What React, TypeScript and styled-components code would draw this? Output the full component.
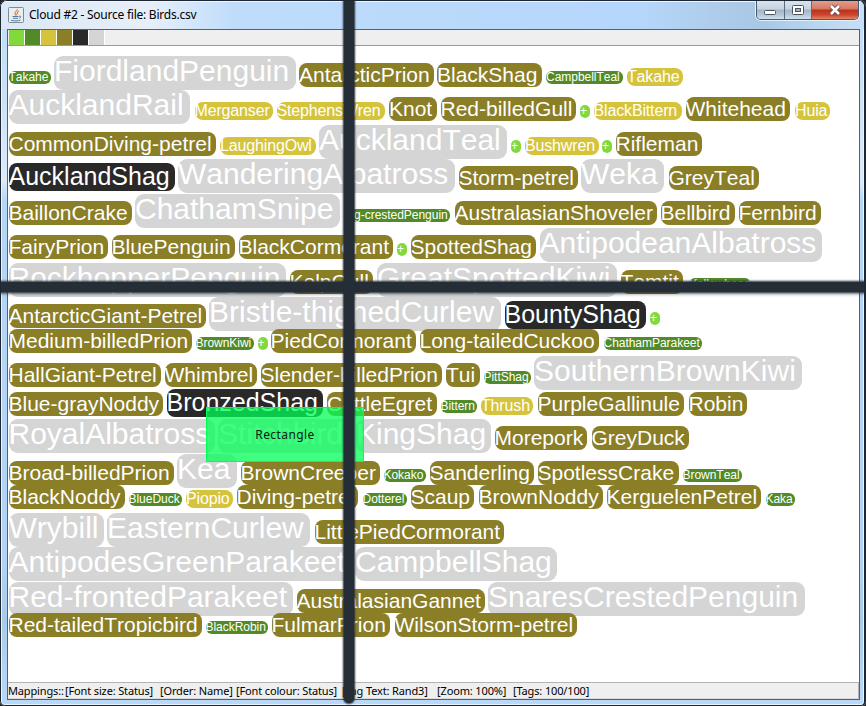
import React from "react";
import styled, { createGlobalStyle } from "styled-components";

type Kind = "extinct" | "threatened" | "rare" | "common" | "dark" | "pale";

const kinds: Record<Kind, { color: string; size: number; line: number; height: number; top: number; radius: number; spacing: number }> = {
  extinct: { color: "#82d93c", size: 12, line: 12, height: 13, top: 15, radius: 6, spacing: 0 },
  threatened: { color: "#528a27", size: 12, line: 12, height: 13, top: 15, radius: 6, spacing: -0.03 },
  rare: { color: "#d5c33c", size: 16, line: 17, height: 18, top: 12, radius: 8, spacing: -0.15 },
  common: { color: "#8a7e27", size: 21, line: 23, height: 24, top: 7, radius: 8, spacing: 0 },
  dark: { color: "#292929", size: 25, line: 26, height: 28, top: 4, radius: 8, spacing: 0 },
  pale: { color: "#d5d5d5", size: 30, line: 29, height: 34, top: 0, radius: 9, spacing: 0 },
};

type Bird = [name: string, kind: Kind, left: number, right: number];
const [X, T, R, C, D, P]: Kind[] = ["extinct", "threatened", "rare", "common", "dark", "pale"];

const rows: { height: number; birds: Bird[] }[] = [
  { height: 34, birds: [["Takahe", T, 8.5, 51], ["FiordlandPenguin", P, 54, 296], ["AntarcticPrion", C, 299, 434], ["BlackShag", C, 437, 542], ["CampbellTeal", T, 546, 623], ["Takahe", R, 627, 683]] },
  { height: 35, birds: [["AucklandRail", P, 8.5, 190], ["Merganser", R, 194.5, 273], ["StephensWren", R, 276.5, 385], ["Knot", C, 389, 437], ["Red-billedGull", C, 440.5, 576], ["+", X, 580, 590], ["BlackBittern", R, 593.5, 682], ["Whitehead", C, 685.5, 790], ["Huia", R, 795, 830]] },
  { height: 34, birds: [["CommonDiving-petrel", C, 8.5, 216], ["LaughingOwl", R, 220, 316], ["AucklandTeal", P, 319, 507], ["+", X, 511, 521], ["Bushwren", R, 525, 599], ["+", X, 602, 612], ["Rifleman", C, 615.5, 702]] },
  { height: 35, birds: [["AucklandShag", D, 8.5, 175], ["WanderingAlbatross", P, 178, 455], ["Storm-petrel", C, 458.5, 578], ["Weka", P, 581, 664], ["GreyTeal", C, 668.5, 759]] },
  { height: 34, birds: [["BaillonCrake", C, 8.5, 132], ["ChathamSnipe", P, 135, 340], ["Big-crestedPenguin", T, 343.5, 450], ["AustralasianShoveler", C, 454.5, 657], ["Bellbird", C, 660.5, 735], ["Fernbird", C, 738.5, 821]] },
  { height: 35, birds: [["FairyPrion", C, 8.5, 108], ["BluePenguin", C, 111.5, 235], ["BlackCormorant", C, 238.5, 393], ["+", X, 397, 407], ["SpottedShag", C, 410.5, 536], ["AntipodeanAlbatross", P, 539.5, 822]] },
  { height: 34, birds: [["RockhopperPenguin", P, 8.5, 286], ["KelpGull", C, 289.5, 373], ["GreatSpottedKiwi", P, 377, 617], ["Tomtit", C, 620.5, 683], ["Yellowhead", T, 689, 751]] },
  { height: 25, birds: [["AntarcticGiant-Petrel", C, 8.5, 206], ["Bristle-thighedCurlew", P, 209, 501], ["BountyShag", D, 504.5, 646], ["+", X, 650, 660]] },
  { height: 34, birds: [["Medium-billedPrion", C, 8.5, 192], ["BrownKiwi", T, 195.5, 254], ["+", X, 257.5, 267.5], ["PiedCormorant", C, 270.5, 416], ["Long-tailedCuckoo", C, 419.5, 599], ["ChathamParakeet", T, 603.5, 702]] },
  { height: 29, birds: [["HallGiant-Petrel", C, 8.5, 161], ["Whimbrel", C, 164.5, 257], ["Slender-billedPrion", C, 260.5, 442], ["Tui", C, 446, 480], ["PittShag", T, 483.5, 531], ["SouthernBrownKiwi", P, 534, 802]] },
  { height: 34, birds: [["Blue-grayNoddy", C, 8.5, 163], ["BronzedShag", D, 166.5, 323], ["CattleEgret", C, 327, 437], ["Bittern", T, 440.5, 477], ["Thrush", R, 481, 533], ["PurpleGallinule", C, 537.5, 684], ["Robin", C, 688.5, 747]] },
  { height: 35, birds: [["RoyalAlbatross", P, 8.5, 215], ["Stitchbird", P, 218, 354], ["KingShag", P, 356, 491], ["Morepork", C, 494.5, 587], ["GreyDuck", C, 591.5, 689]] },
  { height: 24, birds: [["Broad-billedPrion", C, 8.5, 174], ["Kea", P, 177, 237], ["BrownCreeper", C, 240.5, 380], ["Kokako", T, 383.5, 426], ["Sanderling", C, 429.5, 534], ["SpotlessCrake", C, 537.5, 679], ["BrownTeal", T, 682.5, 742]] },
  { height: 35, birds: [["BlackNoddy", C, 8.5, 125], ["BlueDuck", T, 128.5, 182], ["Piopio", R, 186, 233], ["Diving-petrel", C, 236.5, 358], ["Dotterel", T, 362.5, 407], ["Scaup", C, 410.5, 474], ["BrownNoddy", C, 478.5, 603], ["KerguelenPetrel", C, 606.5, 761], ["Kaka", T, 765.5, 795]] },
  { height: 34, birds: [["Wrybill", P, 8.5, 104], ["EasternCurlew", P, 107, 310], ["LittlePiedCormorant", C, 314.5, 504]] },
  { height: 35, birds: [["AntipodesGreenParakeet", P, 8.5, 353], ["CampbellShag", P, 355, 557]] },
  { height: 24, birds: [["Red-frontedParakeet", P, 8.5, 293], ["AustralasianGannet", C, 296.5, 485], ["SnaresCrestedPenguin", P, 488, 805]] },
  { height: 34, birds: [["Red-tailedTropicbird", C, 8.5, 202], ["BlackRobin", T, 205.5, 268], ["FulmarPrion", C, 271.5, 390], ["WilsonStorm-petrel", C, 394.5, 577]] },
];

const mappings: [string, number][] = [
  ["Mappings::", 57],
  ["[Font size: Status]", 95],
  ["[Order: Name]", 76],
  ["[Font colour: Status]", 106],
  ["[Tag Text: Rand3]", 95],
  ["[Zoom: 100%]", 76],
  ["[Tags: 100/100]", 90],
];

const GlobalStyle = createGlobalStyle`
  body { margin: 0; overflow: hidden; }
  * { box-sizing: border-box; }
`;

const Window = styled.main`
  position: relative;
  width: 866px;
  height: 706px;
  padding: 0 6px 6px 6px;
  border: 1px solid #1d2733;
  border-right-width: 2px;
  border-radius: 7px 7px 5px 5px;
  background: linear-gradient(#bfdcf9 0, #c9e0f7 80px, #dceafa 180px, #b6d6f8 200px, #b2d3f5 560px, #a9cbea 620px, #b9d9fa 100%);
  box-shadow: inset 0 0 0 1px #e8f4ff, 0 0 0 8px #20252b;
  overflow: hidden;
  display: flex;
  flex-direction: column;
`;

const TitleBar = styled.header`
  height: 28px;
  flex: none;
  display: flex;
  align-items: flex-start;
  margin: 0 -6px;
  padding: 0 5px 0 7px;
  background: linear-gradient(90deg, #dce8f5 0, #e6eff9 150px, #bfdcfb 235px, #b5d7fb 640px, #afcdeb 710px, #a9c8e6 760px, #c7e0f7 100%);
  box-shadow: inset 0 1px #eef7ff;
`;

const JavaIcon = styled.svg`
  width: 16px;
  height: 16px;
  margin-top: 6px;
`;

const Title = styled.h1`
  flex: 1;
  margin: 5px 0 0 5px;
  font: 400 12px/18px "Noto Sans", sans-serif;
  letter-spacing: -0.24px;
  color: #000;
`;

const Controls = styled.div`
  display: flex;
  height: 20px;
  margin-top: -1px;
  border: 1px solid #4d5b6b;
  border-top: 0;
  border-radius: 0 0 5px 5px;
  overflow: hidden;
  box-shadow: 0 0 0 1px #e3effa;
`;

const Control = styled.button<{ $width: number; $close?: boolean }>`
  width: ${(p) => p.$width}px;
  height: 19px;
  padding: 0;
  border: 0;
  border-right: ${(p) => (p.$close ? "0" : "1px solid #5c6b7c")};
  background: ${(p) =>
    p.$close
      ? "linear-gradient(#e6a090 0, #d67862 9px, #bd2f1b 10px, #ca4930 15px, #df8563 19px)"
      : "linear-gradient(#dce6f0 0, #c6d3e1 9px, #a3b5c9 10px, #b5c8da 15px, #d0e1ef 19px)"};
  display: flex;
  justify-content: center;
`;

const Content = styled.section`
  width: 853px;
  height: 671px;
  flex: none;
  display: flex;
  flex-direction: column;
  border: 1px solid #536270;
  background: #fff;
`;

const Palette = styled.div`
  height: 16px;
  flex: none;
  display: flex;
  gap: 1px;
  padding-left: 1px;
  background: #efefef;
  border-bottom: 1px solid #9a9a9a;
`;

const Swatch = styled.span<{ $color: string }>`
  width: 15px;
  height: 15px;
  background: ${(p) => p.$color};
  box-shadow: 1px 0 #fff;
`;

const Cloud = styled.div`
  flex: 1;
  padding-top: 10px;
  overflow: hidden;
`;

const CloudRow = styled.div<{ $height: number }>`
  display: flex;
  align-items: flex-start;
  height: ${(p) => p.$height}px;
`;

const Tag = styled.span<{ $kind: Kind; $width: number; $gap: number }>`
  flex: none;
  width: ${(p) => p.$width}px;
  height: ${(p) => kinds[p.$kind].height}px;
  margin: ${(p) => kinds[p.$kind].top}px 0 0 ${(p) => p.$gap}px;
  border-radius: ${(p) => kinds[p.$kind].radius}px;
  background: ${(p) => kinds[p.$kind].color};
  color: #fff;
  font: ${(p) => kinds[p.$kind].size}px/${(p) => kinds[p.$kind].line}px "Liberation Sans", Arial, sans-serif;
  font-kerning: none;
  letter-spacing: ${(p) => kinds[p.$kind].spacing}px;
  white-space: nowrap;
`;

const StatusBar = styled.footer`
  height: 17px;
  flex: none;
  display: flex;
  background: #efefef;
  border: 1px solid #b4b4b4;
  border-left: 0;
  border-bottom-color: #dadada;
  font: 11px/15px "Noto Sans", sans-serif;
  letter-spacing: -0.14px;
  color: #000;
`;

const Mapping = styled.span<{ $width: number }>`
  width: ${(p) => p.$width}px;
  white-space: nowrap;
`;

const VerticalBar = styled.div`
  position: absolute;
  left: 343px;
  top: -6px;
  width: 10px;
  height: 708px;
  border-radius: 5px;
  background: #252d36;
  box-shadow: 0 0 2px 1px #252d36;
`;

const HorizontalBar = styled.div`
  position: absolute;
  left: -6px;
  top: 281px;
  width: 880px;
  height: 10px;
  background: #252d36;
  box-shadow: 0 0 2px 1px #252d36, 0 3px 3px #252d3640;
`;

const Marker = styled.div`
  position: absolute;
  left: 205px;
  top: 406px;
  width: 158px;
  height: 55px;
  display: flex;
  align-items: center;
  justify-content: center;
  border: 1px solid #00ff55;
  background: rgba(0, 255, 86, 0.75);
  color: #0b1c10;
  font: 12px/16px "Noto Sans", sans-serif;
  letter-spacing: 0.4px;
`;

function BirdRow({ height, birds }: { height: number; birds: Bird[] }) {
  return (
    <CloudRow $height={height}>
      {birds.map(([name, kind, left, right], i) => (
        <Tag key={i} $kind={kind} $width={right - left} $gap={left - (i ? birds[i - 1][3] : 8)}>
          {name}
        </Tag>
      ))}
    </CloudRow>
  );
}

export default function App() {
  return (
    <>
      <GlobalStyle />
      <Window>
        <TitleBar>
          <JavaIcon viewBox="0 0 16 16" fill="none">
            <rect x=".5" y=".5" width="15" height="15" rx="1" fill="#e9eef2" stroke="#7d8b98" />
            <path d="M9.5 2C10 4 6 4.5 7 6.8c.3.8 1 1.1 1 2M10.8 4.3C8 5.6 9.9 6.5 8.7 8" stroke="#e07a24" strokeWidth="1.1" />
            <path d="M4.5 9.5h6M5 11.3h5M3 13.3c3 .8 7 .8 9.5-.2M11 9.2c2.4-.6 2.2 1.6.2 2" stroke="#54799b" />
          </JavaIcon>
          <Title>Cloud #2 - Source file: Birds.csv</Title>
          <Controls>
            <Control $width={28} aria-label="Minimize">
              <svg width="13" height="19"><rect x=".5" y="10.5" width="11" height="4" rx="1" fill="#fff" stroke="#4c535e" /></svg>
            </Control>
            <Control $width={27} aria-label="Maximize">
              <svg width="13" height="19">
                <rect x=".5" y="5.5" width="11" height="9" rx="1" fill="#fff" stroke="#4c535e" />
                <rect x="3.5" y="8.5" width="5" height="3" fill="#9cb3ca" stroke="#4c535e" />
              </svg>
            </Control>
            <Control $width={46} $close aria-label="Close">
              <svg width="14" height="19"><path d="M3 6l8 8M11 6l-8 8" stroke="#5c4a50" strokeWidth="4.4" /><path d="M3 6l8 8M11 6l-8 8" stroke="#fff" strokeWidth="2.6" /></svg>
            </Control>
          </Controls>
        </TitleBar>
        <Content>
          <Palette>
            {[X, T, R, C, D, P].map((k) => <Swatch key={k} $color={kinds[k].color} />)}
          </Palette>
          <Cloud>
            {rows.map((row, i) => <BirdRow key={i} {...row} />)}
          </Cloud>
          <StatusBar>
            {mappings.map(([text, width]) => <Mapping key={text} $width={width}>{text}</Mapping>)}
          </StatusBar>
        </Content>
        <Marker>Rectangle</Marker>
        <HorizontalBar />
        <VerticalBar />
      </Window>
    </>
  );
}
